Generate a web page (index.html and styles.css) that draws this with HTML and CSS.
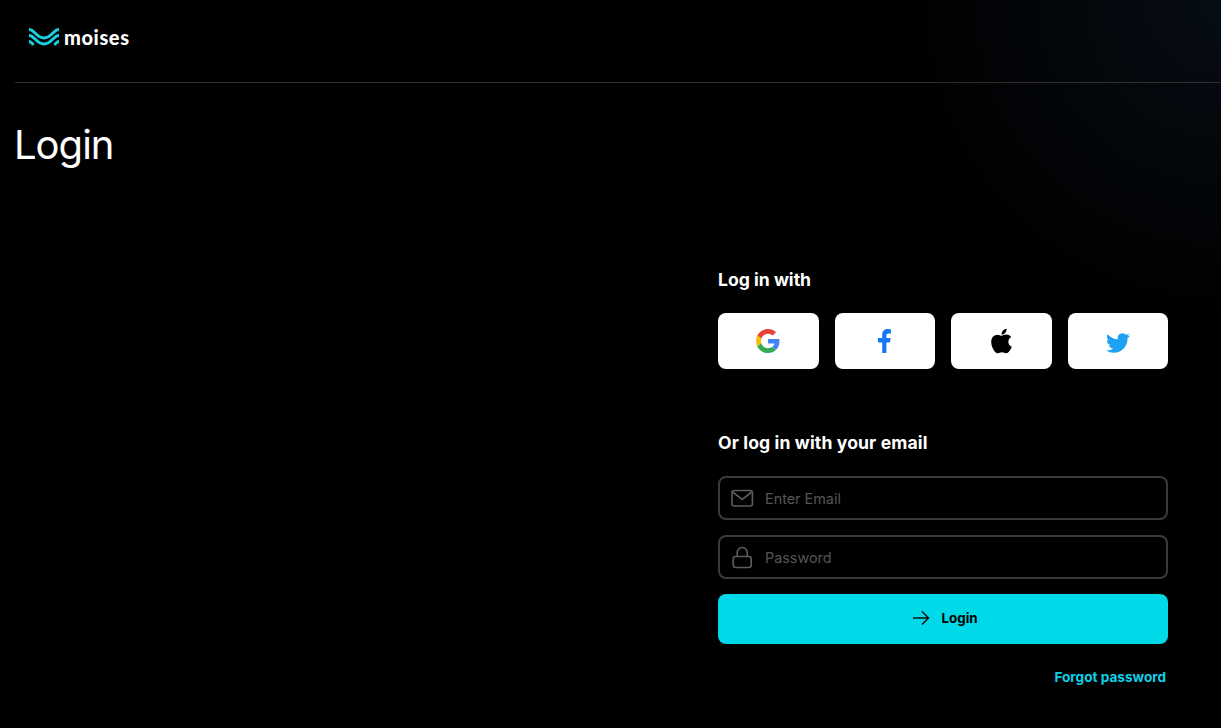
FILE: index.html
```html
<!DOCTYPE html>
<html>
<head>
  <title>Login</title>
  <link rel="stylesheet" href="styles.css">
</head>
<body>
  <!-- Header Section -->
  <header class="header">
    <div class="logo">
      <svg class="logo-mark" viewBox="0 0 30 18" fill="none" stroke="#19d0e0" stroke-width="2.800">
        <path d="M0 1.500 C6 1.500 7 10 15 10 C23 10 24 1.500 30 1.500"/>
        <path d="M0 7.500 C6 7.500 7 16 15 16 C23 16 24 7.500 30 7.500"/>
        <path d="M0 13.500 C2 13.500 3 15 4.500 17"/>
        <path d="M30 13.500 C28 13.500 27 15 25.500 17"/>
      </svg>
      <span class="logo-text">moises</span>
    </div>
  </header>

  <h1 class="page-title">Login</h1>

  <!-- Login Form Section -->
  <main class="login-panel">
    <h2 class="section-title">Log in with</h2>
    <div class="social-list">
      <a class="social-button" href="#">
        <svg width="24" height="24" viewBox="0 0 48 48">
          <path fill="#EA4335" d="M24 9.500c3.540 0 6.710 1.220 9.210 3.600l6.850-6.850C35.900 2.380 30.470 0 24 0 14.620 0 6.510 5.380 2.560 13.220l7.980 6.190C12.430 13.720 17.740 9.500 24 9.500z"/>
          <path fill="#4285F4" d="M46.980 24.550c0-1.570-.15-3.090-.38-4.550H24v9.020h12.940c-.58 2.960-2.260 5.480-4.780 7.180l7.730 6c4.510-4.180 7.090-10.360 7.090-17.650z"/>
          <path fill="#FBBC05" d="M10.530 28.590c-.48-1.450-.76-2.990-.76-4.590s.27-3.140.76-4.590l-7.980-6.190C.92 16.460 0 20.120 0 24c0 3.880.92 7.540 2.560 10.780l7.970-6.190z"/>
          <path fill="#34A853" d="M24 48c6.480 0 11.930-2.130 15.890-5.810l-7.730-6c-2.150 1.450-4.920 2.300-8.160 2.300-6.260 0-11.570-4.220-13.470-9.910l-7.980 6.190C6.510 42.620 14.620 48 24 48z"/>
        </svg>
      </a>
      <a class="social-button" href="#">
        <svg width="13" height="24" viewBox="0 0 13 24">
          <path fill="#1877f2" d="M8.400 24V13.400h3.600l.6-4.300H8.400V6.500c0-1.200.4-2.100 2.100-2.100H13V.4C12.500.3 11.200 0 9.700 0 6.500 0 4.200 2 4.200 5.800v3.300H0v4.300h4.200V24z"/>
        </svg>
      </a>
      <a class="social-button" href="#">
        <svg width="21" height="28" viewBox="0 0 384 512">
          <path fill="#000" d="M318.700 268.700c-.2-36.700 16.400-64.400 50-84.800-18.800-26.900-47.200-41.700-84.700-44.600-35.500-2.800-74.300 20.700-88.500 20.700-15 0-49.400-19.700-76.400-19.700C63.300 141.200 4 184.800 4 273.500q0 39.300 14.400 81.200c12.800 36.700 59 126.700 107.200 125.200 25.200-.6 43-17.900 75.800-17.900 31.800 0 48.300 17.900 76.400 17.900 48.600-.7 90.400-82.500 102.600-119.300-65.200-30.700-61.700-90-61.700-91.900zm-56.600-164.200c27.300-32.400 24.800-61.900 24-72.500-24.100 1.400-52 16.400-67.900 34.900-17.500 19.800-27.800 44.300-25.600 71.900 26.100 2 49.900-11.400 69.500-34.300z"/>
        </svg>
      </a>
      <a class="social-button" href="#">
        <svg width="24" height="24" viewBox="0 -2 24 24">
          <path fill="#1da1f2" d="M23.950 4.570a10 10 0 0 1-2.820.77 4.960 4.960 0 0 0 2.160-2.720c-.95.550-2 .96-3.130 1.190a4.920 4.920 0 0 0-8.380 4.480C7.690 8.100 4.070 6.130 1.640 3.160a4.820 4.820 0 0 0-.66 2.470c0 1.710.87 3.210 2.190 4.100a4.900 4.900 0 0 1-2.230-.61v.06a4.920 4.920 0 0 0 3.950 4.830 5 5 0 0 1-2.210.08 4.940 4.940 0 0 0 4.600 3.420A9.870 9.870 0 0 1 0 19.540a14 14 0 0 0 7.560 2.210c9.050 0 14-7.500 14-13.980 0-.21 0-.42-.02-.63a9.940 9.940 0 0 0 2.460-2.550z"/>
        </svg>
      </a>
    </div>

    <h2 class="section-title email-title">Or log in with your email</h2>
    <label class="field">
      <svg class="field-icon" width="24" height="24" viewBox="0 0 24 24" fill="none" stroke="#5c5c5c" stroke-width="1.600">
        <rect x="1" y="4.500" width="20.400" height="15.500" rx="2"/>
        <path d="M1.700 6 L11.200 13.500 L20.700 6"/>
      </svg>
      <input class="field-input" type="text" placeholder="Enter Email">
    </label>
    <label class="field">
      <svg class="field-icon" width="24" height="24" viewBox="0 0 24 24" fill="none" stroke="#5c5c5c" stroke-width="1.600">
        <rect x="2.200" y="11.500" width="18" height="11" rx="2.500"/>
        <path d="M6.200 11.500 V7.500 a5 5 0 0 1 10 0 V11.500"/>
      </svg>
      <input class="field-input" type="password" placeholder="Password">
    </label>
    <button class="login-button" type="button">
      <svg width="20" height="20" viewBox="0 0 20 20" fill="none" stroke="#111" stroke-width="1.500">
        <path d="M2 10 H17.500 M11 3.500 L17.500 10 L11 16.500"/>
      </svg>
      <span>Login</span>
    </button>
    <div class="forgot-row">
      <a class="forgot-link" href="#">Forgot password</a>
    </div>
  </main>
</body>
</html>
```

FILE: styles.css
```css
/* Main Element Styles */
html, body {
  height: 100%;
}
body {
  margin: 0;
  padding-left: 15px;
  box-sizing: border-box;
  overflow: hidden;
  font-family: Inter, "Liberation Sans", sans-serif;
  color: #fff;
  background-color: #000;
  background-image: radial-gradient(circle at 100% 0, #070d15 0, #000 320px);
}

/* Header Styles */
.header {
  height: 82px;
  padding-left: 14px;
  display: flex;
  align-items: center;
  border-bottom: 1px solid #2e2e2e;
}
.logo {
  display: flex;
  align-items: center;
  gap: 5px;
  margin-top: -8px;
}
.logo-mark {
  width: 30px;
  height: 18px;
}
.logo-text {
  font-family: Lato, sans-serif;
  font-size: 20px;
  font-weight: 900;
  letter-spacing: 0.6px;
  line-height: 20px;
}

/* Title Styles */
.page-title {
  margin: 38px 0 0;
  font-size: 40px;
  font-weight: 400;
  line-height: 48px;
  letter-spacing: -1px;
  text-indent: -1px;
}

/* Form Panel Styles */
.login-panel {
  width: 450px;
  margin: 101px 0 0 703px;
}
.section-title {
  margin: 0;
  font-size: 17.6px;
  font-weight: 700;
  line-height: 20px;
}
.social-list {
  display: grid;
  grid-template-columns: repeat(4, 1fr);
  gap: 16px;
  margin-top: 23px;
}
.social-button {
  height: 56px;
  display: flex;
  align-items: center;
  justify-content: center;
  background: #fff;
  border-radius: 8px;
}
.email-title {
  margin-top: 64px;
  letter-spacing: 0.12px;
}

/* Field Styles */
.field {
  height: 44px;
  display: flex;
  align-items: center;
  gap: 10px;
  padding: 0 11px;
  margin-top: 15px;
  border: 2px solid #3a3a3a;
  border-radius: 8px;
  box-sizing: border-box;
}
.email-title + .field {
  margin-top: 23px;
}
.field-icon {
  flex: none;
}
.field-input {
  flex: 1;
  min-width: 0;
  padding: 0;
  border: 0;
  outline: 0;
  background: transparent;
  color: #fff;
  font-family: inherit;
  font-size: 14.4px;
}
.field-input::placeholder {
  color: #555;
}

/* Button Styles */
.login-button {
  width: 100%;
  height: 50px;
  margin-top: 15px;
  padding: 0 0 2px 3px;
  display: flex;
  align-items: center;
  justify-content: center;
  gap: 10px;
  border: 0;
  border-radius: 8px;
  background: #00d9e8;
  color: #000;
  font-family: inherit;
  font-size: 13.4px;
  font-weight: 700;
}
.forgot-row {
  margin-top: 22px;
  padding-right: 2px;
  text-align: right;
}
.forgot-link {
  color: #0fcfe6;
  font-size: 13.6px;
  font-weight: 700;
  line-height: 17px;
  text-decoration: none;
}
```
